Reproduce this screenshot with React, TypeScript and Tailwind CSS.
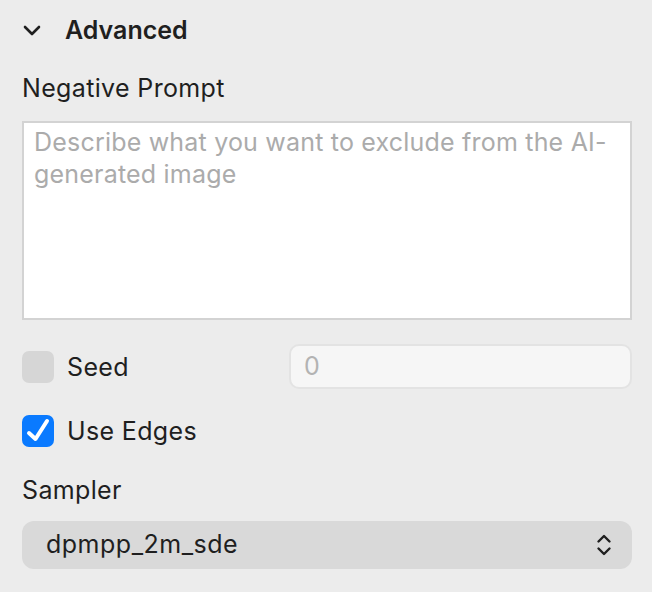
export default function App() {
  return (
    <div className="min-h-screen bg-[#ececec] pl-[22px] pr-[20px] pt-[12px] font-['Inter','Noto_Sans',sans-serif] text-[#1f1f1f]">
      <div className="flex h-[36px] items-center">
        <svg width="18" height="11" viewBox="0 0 18 11" className="ml-[1px]" fill="none">
          <path d="M2 2 L9 9 L16 2" stroke="#1f1f1f" strokeWidth="2.6" strokeLinecap="round" strokeLinejoin="round" />
        </svg>
        <span className="ml-[24px] text-[25px] font-semibold leading-[36px]">Advanced</span>
      </div>

      <div className="mt-[24px] text-[25px] leading-[32px] tracking-[0.35px]">Negative Prompt</div>

      <div className="mt-[17px] h-[199px] border-2 border-[#d3d3d3] bg-white px-[10px] pt-[3px] text-[25px] leading-[32px] tracking-[0.2px] text-[#ababab]">
        <div className="whitespace-nowrap">Describe what you want to exclude from the AI-</div>
        <div className="whitespace-nowrap">generated image</div>
      </div>

      <div className="mt-[24px] flex h-[45px] items-center justify-between">
        <div className="flex items-center">
          <div className="h-[32px] w-[32px] rounded-[7px] bg-[#d6d6d6]" />
          <span className="ml-[13px] text-[25px] leading-[32px] tracking-[0.35px]">Seed</span>
        </div>
        <div className="flex h-[45px] w-[343px] items-center rounded-[10px] border-2 border-[#e3e3e3] bg-[#f6f6f6] px-[13px] text-[25px] text-[#b3b3b3]">
          0
        </div>
      </div>

      <div className="mt-[26px] flex h-[32px] items-center">
        <div className="flex h-[32px] w-[32px] items-center justify-center rounded-[7px] bg-[#0a7aff]">
          <svg width="32" height="32" viewBox="0 0 32 32" fill="none">
            <path d="M7 18 L13.5 24 L25 6" stroke="white" strokeWidth="4" strokeLinecap="round" strokeLinejoin="round" />
          </svg>
        </div>
        <span className="ml-[13px] text-[25px] leading-[32px] tracking-[0.35px]">Use Edges</span>
      </div>

      <div className="mt-[27px] text-[25px] leading-[32px] tracking-[0.35px]">Sampler</div>

      <div className="mt-[15px] flex h-[48px] items-center justify-between rounded-[12px] bg-[#d9d9d9] pl-[24px] pr-[20px] text-[25px] tracking-[0.5px]">
        <span>dpmpp_2m_sde</span>
        <svg width="16" height="24" viewBox="0 0 16 24" fill="none">
          <path d="M2.5 8.5 L8 3 L13.5 8.5" stroke="#1f1f1f" strokeWidth="2.4" strokeLinecap="round" strokeLinejoin="round" />
          <path d="M2.5 15.5 L8 21 L13.5 15.5" stroke="#1f1f1f" strokeWidth="2.4" strokeLinecap="round" strokeLinejoin="round" />
        </svg>
      </div>
    </div>
  );
}
